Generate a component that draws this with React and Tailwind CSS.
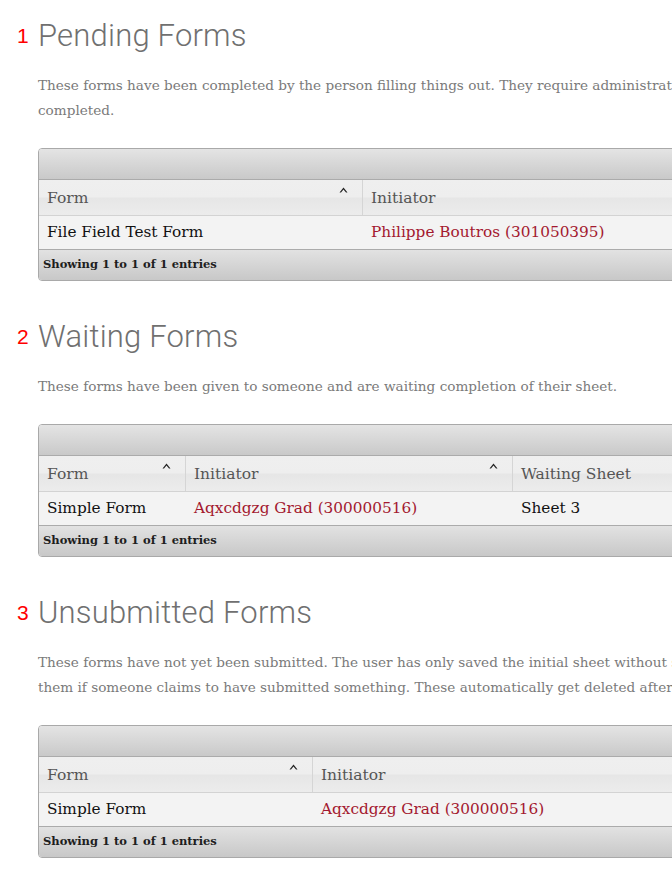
import React from "react";

const serif = "font-['DejaVu_Serif',serif]";

function Caret() {
  return (
    <svg width="9" height="6" viewBox="0 0 9 6" className="absolute right-[14px] top-[7px]">
      <path d="M0.5 5.5 L4.5 0.5 L8.5 5.5 L7 5.5 L4.5 2.6 L2 5.5 Z" fill="#222" />
    </svg>
  );
}

function Table({ cols, row }) {
  return (
    <div className="mt-[25px] w-[900px] rounded-l-[4px] border border-[#a9a9a9] overflow-hidden">
      <div className="h-[31px] bg-[linear-gradient(#e4e4e4,#c9c9c9)] border-b border-[#ababab]" />
      <div className="flex h-[36px] border-b border-[#d3d3d3] bg-[linear-gradient(#efefef_0%,#eeeeee_48%,#e6e6e6_52%,#ececec_100%)]">
        {cols.map((c, i) => (
          <div
            key={i}
            className={`relative flex items-center pl-[8px] pt-[2px] text-[15.5px] text-[#555] ${serif} ${c.w ? "" : "flex-1"} ${i < cols.length - 1 ? "border-r border-[#d5d5d5]" : ""}`}
            style={c.w ? { width: c.w } : undefined}
          >
            {c.label}
            {c.sort && <Caret />}
          </div>
        ))}
      </div>
      <div className="flex h-[34px] bg-[#f3f3f3] border-b border-[#ababab]">
        {cols.map((c, i) => (
          <div
            key={i}
            className={`flex items-center pl-[8px] text-[15.3px] ${serif} ${c.w ? "" : "flex-1"} ${row[i].link ? "text-[#a3192f]" : "text-[#111]"}`}
            style={c.w ? { width: c.w } : undefined}
          >
            {row[i].text}
          </div>
        ))}
      </div>
      <div className={`h-[30px] flex items-center pl-[4px] bg-[linear-gradient(#e2e2e2,#c8c8c8)] text-[11.5px] font-bold text-[#1e1e1e] ${serif}`}>
        Showing 1 to 1 of 1 entries
      </div>
    </div>
  );
}

function Section({ num, title, children, table, first }) {
  return (
    <section className={first ? "pt-4" : "pt-[36px]"}>
      <div className="relative">
        <span className="absolute left-[-21px] top-[9px] text-[21px] leading-none text-[#ff0000] font-['Liberation_Sans',sans-serif]">
          {num}
        </span>
        <h2 className="text-[31px] leading-[40px] font-light text-[#707070] font-['Roboto',sans-serif] tracking-[0.2px]">
          {title}
        </h2>
      </div>
      <p className={`mt-[17px] text-[13.6px] leading-[25px] text-[#7a7a7a] whitespace-nowrap ${serif}`}>{children}</p>
      {table}
    </section>
  );
}

export default function App() {
  return (
    <div className="w-[672px] h-[884px] overflow-hidden bg-white pl-[38px]">
      <Section
        first
        num="1"
        title="Pending Forms"
        table={
          <Table
            cols={[{ label: "Form", w: 324, sort: true }, { label: "Initiator" }]}
            row={[{ text: "File Field Test Form" }, { text: "Philippe Boutros (301050395)", link: true }]}
          />
        }
      >
        These forms have been completed by the person filling things out. They require administrative review before they are
        <br />
        completed.
      </Section>
      <Section
        num="2"
        title="Waiting Forms"
        table={
          <Table
            cols={[
              { label: "Form", w: 147, sort: true },
              { label: "Initiator", w: 327, sort: true },
              { label: "Waiting Sheet" },
            ]}
            row={[{ text: "Simple Form" }, { text: "Aqxcdgzg Grad (300000516)", link: true }, { text: "Sheet 3" }]}
          />
        }
      >
        These forms have been given to someone and are waiting completion of their sheet.
      </Section>
      <Section
        num="3"
        title="Unsubmitted Forms"
        table={
          <Table
            cols={[{ label: "Form", w: 274, sort: true }, { label: "Initiator" }]}
            row={[{ text: "Simple Form" }, { text: "Aqxcdgzg Grad (300000516)", link: true }]}
          />
        }
      >
        These forms have not yet been submitted. The user has only saved the initial sheet without submitting it. You can review
        <br />
        them if someone claims to have submitted something. These automatically get deleted after a period of time.
      </Section>
    </div>
  );
}
